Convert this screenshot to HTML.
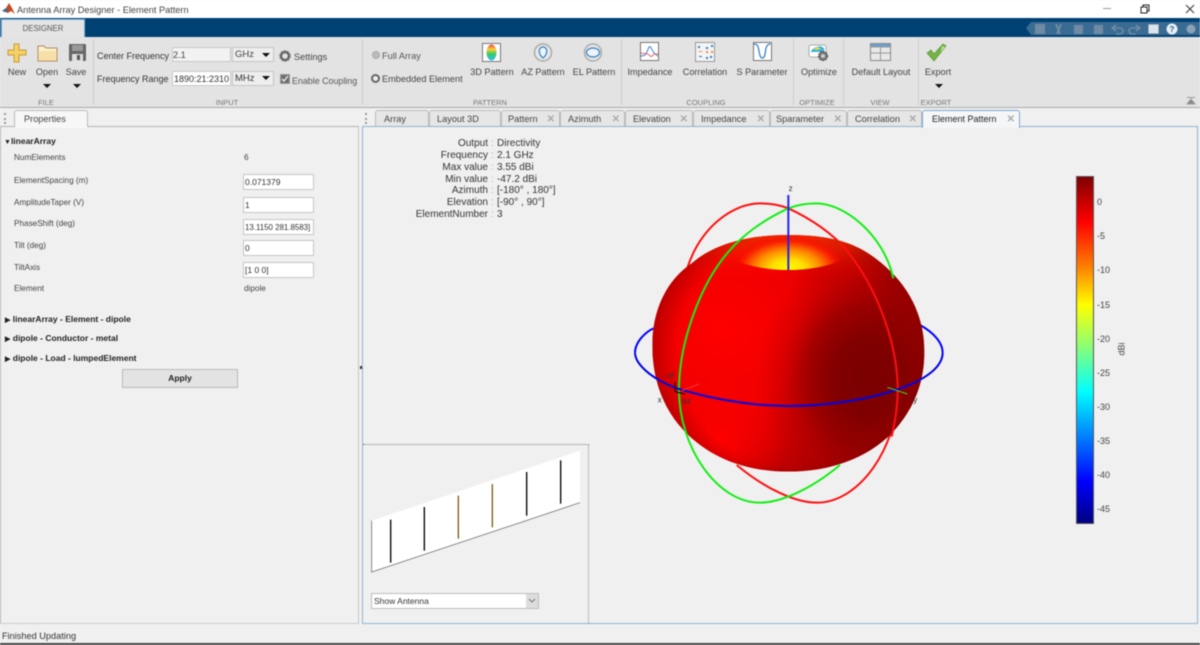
<!DOCTYPE html>
<html><head><meta charset="utf-8"><style>
html,body{margin:0;padding:0}
html{background:#f0f0f0}
body{width:1200px;height:645px;position:relative;overflow:hidden;background:#f0f0f0;font-family:"Liberation Sans",sans-serif;color:#333;filter:blur(.4px)}
.t{position:absolute;white-space:nowrap;line-height:12px;font-size:9.2px}
.c{transform:translateX(-50%)}
.b{position:absolute;box-sizing:border-box}
.sec{font-size:7.5px;color:#777;top:97px}
.lbl{font-size:9.1px;color:#444;top:66px}
.p{font-size:8.2px;color:#444}
.h{font-size:8.5px;font-weight:bold;color:#222}
.in{position:absolute;left:243px;width:71px;height:16px;background:#fff;border:1px solid #c6c6c6;box-sizing:border-box;font-size:8.5px;line-height:15px;padding-left:1px;color:#333;white-space:nowrap;overflow:hidden}
.tab{position:absolute;top:110px;height:17px;box-sizing:border-box;background:#e6e6e6;border:1px solid #bbb;border-bottom:none;border-radius:3px 3px 0 0;font-size:9.2px;line-height:17px;color:#444;padding-left:7px;white-space:nowrap}
.x{position:absolute;right:4px;top:0;color:#aaa;font-size:10px;font-weight:bold}
.sep{position:absolute;top:39px;height:66px;width:1px;background:#cdcdcd}
.info{font-size:10px;color:#333}
.k{right:712px}
.col{left:491px;color:#aaa}
.tick{font-size:9px;color:#444;left:1097px}
.tri{position:absolute;width:0;height:0;border-left:4px solid transparent;border-right:4px solid transparent;border-top:4px solid #111}
svg{position:absolute}
</style></head><body>
<!-- title bar -->
<div class="b" style="left:0;top:0;width:1200px;height:18px;background:#fff"></div>
<svg style="left:2px;top:2px" width="14" height="14" viewBox="0 0 14 14"><path d="M0 9L4 6 7 1 10 6 13 12 9 9 6 11Z" fill="#c8481c"/><path d="M0 9L4 6 6 8 4 10Z" fill="#2a6fb0"/></svg>
<div class="t" style="left:17px;top:4px;font-size:9.2px;color:#444">Antenna Array Designer - Element Pattern</div>
<svg style="left:1090px;top:0" width="110" height="18"><path d="M13 8.500H21" stroke="#999"/><path d="M51 7h6v6h-6zM53 7V5h6v6h-2" fill="none" stroke="#222"/><path d="M96 5l8 8M104 5l-8 8" stroke="#333"/></svg>
<!-- blue band -->
<div class="b" style="left:0;top:18px;width:1200px;height:19px;background:#004174"></div>
<div class="b" style="left:1px;top:19px;width:84px;height:18px;background:#e4e4e4;border:1px solid #7fb3dc;border-bottom:none"></div>
<div class="t c" style="left:43px;top:23px;font-size:7.8px;color:#555">DESIGNER</div>
<!-- quick toolbar -->
<svg style="left:1026px;top:20px" width="174" height="17" viewBox="0 0 174 17">
<path d="M0 8L5 2H174V15H5Z" fill="#3a6b93"/>
<rect x="9" y="4" width="10" height="10" fill="#6f8aa2"/><path d="M30 4l4 10M35 4l-4 10" stroke="#6f8aa2" stroke-width="2"/>
<rect x="48" y="5" width="9" height="9" fill="#6f8aa2"/><rect x="68" y="5" width="9" height="9" fill="#6f8aa2"/>
<path d="M90 5l-4 3 4 3M86 8h8a3 3 0 0 1 0 6h-4" fill="none" stroke="#6f8aa2" stroke-width="1.600"/>
<path d="M110 5l4 3-4 3M114 8h-8a3 3 0 0 0 0 6h4" fill="none" stroke="#6f8aa2" stroke-width="1.600"/>
<rect x="122" y="4" width="11" height="10" fill="#dbe4ec" stroke="#53718a"/>
<circle cx="146" cy="9" r="5.500" fill="#e8eff5"/><text x="143.500" y="12" font-size="8" font-weight="bold" fill="#2f6188" font-family="Liberation Sans">?</text>
<circle cx="165" cy="9" r="4.500" fill="#8aa2b6"/>
</svg>
<!-- ribbon -->
<div class="b" style="left:0;top:37px;width:1200px;height:71px;background:#e3e3e3;border-bottom:1px solid #aaa"></div>
<div class="sep" style="left:93px"></div><div class="sep" style="left:362px"></div><div class="sep" style="left:621px"></div><div class="sep" style="left:793px"></div><div class="sep" style="left:843px"></div><div class="sep" style="left:918px"></div>
<!-- FILE icons -->
<svg style="left:7px;top:43px" width="80" height="20" viewBox="0 0 80 20">
<path d="M7 1h5v6h7v5h-7v7H7v-7H1V7h6z" fill="#f4d264" stroke="#c99a3a"/>
<path d="M31 3h6l2 2h11v13H31z" fill="#fdf0cf" stroke="#b08a5c"/><path d="M32 8h17v9H32z" fill="#f7e0a8"/>
<rect x="62" y="1" width="17" height="17" rx="1" fill="#666"/><rect x="65" y="2" width="11" height="6" fill="#999"/><rect x="65" y="11" width="11" height="7" fill="#ddd"/><rect x="70" y="12" width="3" height="5" fill="#555"/>
</svg>
<div class="t c lbl" style="left:17px">New</div><div class="t c lbl" style="left:47px">Open</div><div class="t c lbl" style="left:76px">Save</div>
<div class="tri" style="left:43px;top:84px"></div><div class="tri" style="left:73px;top:84px"></div>
<div class="t c sec" style="left:46px">FILE</div>
<!-- INPUT -->
<div class="t" style="left:97px;top:50px;color:#333;font-size:9px">Center Frequency</div>
<div class="t" style="left:97px;top:73px;color:#333;font-size:9px">Frequency Range</div>
<div class="b" style="left:172px;top:47px;width:59px;height:15px;background:#f2f2f2;border:1px solid #c8c8c8;font-size:9.2px;line-height:14px;color:#444">2.1</div>
<div class="b" style="left:172px;top:71px;width:59px;height:15px;background:#fff;border:1px solid #c8c8c8;font-size:9px;line-height:14px;color:#333;padding-left:1px;overflow:hidden;white-space:nowrap">1890:21:2310</div>
<div class="b" style="left:232px;top:47px;width:42px;height:15px;background:#eee;border:1px solid #c4c4c4;font-size:9.5px;line-height:14px;padding-left:2px;color:#444">GHz</div>
<div class="b" style="left:232px;top:71px;width:42px;height:15px;background:#eee;border:1px solid #c4c4c4;font-size:9.5px;line-height:14px;padding-left:2px;color:#333">MHz</div>
<div class="tri" style="left:262px;top:53px"></div><div class="tri" style="left:262px;top:76px"></div>
<svg style="left:279px;top:50px" width="12" height="12"><circle cx="6" cy="6" r="4" fill="none" stroke="#666" stroke-width="2.500"/><circle cx="6" cy="6" r="5.500" fill="none" stroke="#999" stroke-dasharray="2 1.500"/></svg>
<div class="t" style="left:294px;top:51px;color:#444">Settings</div>
<div class="b" style="left:280px;top:74px;width:10px;height:10px;background:#6e6e6e;border:1px solid #999"></div>
<svg style="left:280px;top:74px" width="10" height="10"><path d="M2 5l2 2 4-5" fill="none" stroke="#eee" stroke-width="1.300"/></svg>
<div class="t" style="left:292px;top:75px;color:#555;font-size:8.9px">Enable Coupling</div>
<div class="t c sec" style="left:227px">INPUT</div>
<!-- PATTERN -->
<div class="b" style="left:372px;top:51px;width:8px;height:8px;border-radius:50%;background:#bbb;border:1px solid #aaa"></div>
<div class="t" style="left:382px;top:50px;color:#555">Full Array</div>
<div class="b" style="left:371px;top:74px;width:9px;height:9px;border-radius:50%;background:#eee;border:2.500px solid #666"></div>
<div class="t" style="left:382px;top:73px;color:#444;font-size:9.2px">Embedded Element</div>
<svg style="left:482px;top:42px" width="120" height="22" viewBox="0 0 120 22">
<rect x=".5" y="1.500" width="18" height="18" fill="#fff" stroke="#777"/>
<defs><linearGradient id="a" x1="0" y1="0" x2="0" y2="1"><stop offset="0" stop-color="#e44"/><stop offset=".3" stop-color="#fc3"/><stop offset=".6" stop-color="#3c6"/><stop offset="1" stop-color="#3bf"/></linearGradient></defs>
<ellipse cx="9.500" cy="10.500" rx="5" ry="8" fill="url(#a)"/>
<circle cx="61" cy="10.500" r="8.500" fill="#e8e8e8" stroke="#aaa" stroke-width="1.500"/><path d="M61 16c-5-4-5-11 0-11s5 7 0 11z" fill="#eef4fa" stroke="#4a8cc7" stroke-width="1.400"/>
<circle cx="111" cy="10.500" r="8.500" fill="#e8e8e8" stroke="#aaa" stroke-width="1.500"/><ellipse cx="111" cy="10.500" rx="6.500" ry="4.500" fill="#eef4fa" stroke="#4a8cc7" stroke-width="1.400"/>
</svg>
<div class="t c lbl" style="left:492px">3D Pattern</div><div class="t c lbl" style="left:543px">AZ Pattern</div><div class="t c lbl" style="left:594px">EL Pattern</div>
<div class="t c sec" style="left:490px">PATTERN</div>
<!-- COUPLING -->
<svg style="left:640px;top:42px" width="135" height="22" viewBox="0 0 135 22">
<rect x=".5" y=".5" width="18" height="18" fill="#fff" stroke="#777"/><path d="M1 14c5 0 5-2 8-9 2-3 3 7 9 9" fill="none" stroke="#3b86c6"/><path d="M1 11c4 1 6 0 8 2s3 2 4 0 3-1 5-1" fill="none" stroke="#e67"/>
<rect x="55.500" y=".5" width="19" height="19" fill="#f4f4f4" stroke="#999"/><g fill="#2a7fc4"><rect x="58" y="4" width="2" height="2"/><rect x="66" y="5" width="2" height="2"/><rect x="71" y="3" width="2" height="2"/><rect x="70" y="14" width="2" height="2"/><rect x="59" y="14" width="3" height="1"/><rect x="66" y="15" width="2" height="2"/></g><g fill="#e84"><rect x="59" y="9" width="3" height="1"/><rect x="66" y="9" width="2" height="2"/><rect x="71" y="9" width="2" height="2"/></g>
<rect x="113.500" y=".5" width="18" height="18" fill="#fff" stroke="#777"/><path d="M114 2c3 0 4 1 5 7s2 7 3.500 7 2.500-2 3-7 2-7 5-7" fill="none" stroke="#3b86c6" stroke-width="1.300"/>
</svg>
<div class="t c lbl" style="left:650px">Impedance</div><div class="t c lbl" style="left:705px">Correlation</div><div class="t c lbl" style="left:762px">S Parameter</div>
<div class="t c sec" style="left:706px">COUPLING</div>
<!-- OPTIMIZE -->
<svg style="left:808px;top:43px" width="22" height="20" viewBox="0 0 22 20">
<rect x="1" y="2" width="17" height="12" rx="2" fill="#fff" stroke="#aaa"/><path d="M3 8c3-4 6-4 9-5l4 2v4H3z" fill="#39b5d8"/><path d="M5 6l5-2 3 2-4 1z" fill="#e8d84c"/>
<circle cx="15" cy="13" r="4.500" fill="#777" stroke="#444" stroke-dasharray="2 1"/><circle cx="15" cy="13" r="2" fill="#ccc"/></svg>
<div class="t c lbl" style="left:819px">Optimize</div>
<div class="t c sec" style="left:817px">OPTIMIZE</div>
<!-- VIEW -->
<svg style="left:870px;top:43px" width="22" height="19" viewBox="0 0 22 19"><rect x=".5" y=".5" width="20" height="17" fill="#e8e8e8" stroke="#8a8a8a"/><rect x="1" y="1" width="19" height="2.500" fill="#6aa0cf"/><path d="M1 4h19M10.500 4v13M1 10h19" stroke="#999"/></svg>
<div class="t c lbl" style="left:881px">Default Layout</div>
<div class="t c sec" style="left:880px">VIEW</div>
<!-- EXPORT -->
<svg style="left:926px;top:43px" width="22" height="20" viewBox="0 0 22 20"><path d="M1 10l4-3 3 4 9-10 3 2-12 15z" fill="#72b545" stroke="#5a9636" stroke-width=".7"/><path d="M16 3l3 1-4 5z" fill="#bfe09d"/></svg>
<div class="t c lbl" style="left:938px">Export</div>
<div class="tri" style="left:935px;top:84px"></div>
<div class="t c sec" style="left:936px">EXPORT</div>
<svg style="left:1186px;top:96px" width="10" height="10"><path d="M1 1.500H9M5 3L1 8H9Z" fill="#888" stroke="#999"/></svg>
<!-- left panel tab -->
<div class="b" style="left:14px;top:110px;width:74px;height:17px;background:#f7f7f7;border:1px solid #bbb;border-bottom:none;border-radius:3px 3px 0 0;font-size:9.2px;line-height:17px;padding-left:9px;color:#444">Properties</div>
<div class="b" style="left:0;top:126px;width:359px;height:498px;border:1px solid #b5b5b5;border-right:1px solid #c6c6c6;border-bottom:1px solid #ccc"></div>
<div class="b" style="left:15px;top:126px;width:72px;height:2px;background:#f7f7f7"></div>
<!-- properties -->
<div class="t h" style="left:4px;top:135px"><span style="font-size:7px">&#9660;</span>linearArray</div>
<div class="t p" style="left:14px;top:152px">NumElements</div><div class="t p" style="left:244px;top:152px">6</div>
<div class="t p" style="left:14px;top:175px">ElementSpacing (m)</div><div class="in" style="top:174px">0.071379</div>
<div class="t p" style="left:14px;top:197px">AmplitudeTaper (V)</div><div class="in" style="top:197px">1</div>
<div class="t p" style="left:14px;top:218px">PhaseShift (deg)</div><div class="in" style="top:219px;font-size:7.9px">13.1150 281.8583]</div>
<div class="t p" style="left:14px;top:240px">Tilt (deg)</div><div class="in" style="top:240px">0</div>
<div class="t p" style="left:14px;top:262px">TiltAxis</div><div class="in" style="top:262px">[1 0 0]</div>
<div class="t p" style="left:14px;top:283px">Element</div><div class="t p" style="left:244px;top:283px">dipole</div>
<div class="t h" style="left:5px;top:313px"><span style="font-size:7px">&#9654;</span> linearArray - Element - dipole</div>
<div class="t h" style="left:5px;top:332px"><span style="font-size:7px">&#9654;</span> dipole - Conductor - metal</div>
<div class="t h" style="left:5px;top:352px"><span style="font-size:7px">&#9654;</span> dipole - Load - lumpedElement</div>
<div class="b" style="left:122px;top:369px;width:116px;height:19px;background:#e3e3e3;border:1px solid #bbb;font-size:8.500px;font-weight:bold;line-height:17px;text-align:center;color:#222">Apply</div>
<!-- tabs -->
<div class="tab" style="left:375px;width:54px;padding-left:8px">Array</div>
<div class="tab" style="left:429px;width:72px">Layout 3D</div>
<div class="tab" style="left:501px;width:59px;padding-left:6px">Pattern<span class="x">&#10005;</span></div>
<div class="tab" style="left:560px;width:65px">Azimuth<span class="x">&#10005;</span></div>
<div class="tab" style="left:625px;width:68px">Elevation<span class="x">&#10005;</span></div>
<div class="tab" style="left:693px;width:77px">Impedance<span class="x">&#10005;</span></div>
<div class="tab" style="left:770px;width:77px;padding-left:5px">Sparameter<span class="x">&#10005;</span></div>
<div class="tab" style="left:847px;width:75px">Correlation<span class="x">&#10005;</span></div>
<div class="b" style="left:362px;top:126px;width:836px;height:498px;border:1px solid #8fb4d6;background:#f0f0f0"></div>
<div class="tab" style="left:922px;width:98px;height:18px;background:#f4f6f8;border-color:#7ba9d2;color:#222;padding-left:9px;font-size:9px">Element Pattern<span class="x">&#10005;</span></div>
<!-- info -->
<div class="t info k" style="top:138px">Output</div><div class="t info col" style="top:138px">:</div><div class="t info" style="left:497px;top:138px">Directivity</div>
<div class="t info k" style="top:150px">Frequency</div><div class="t info col" style="top:150px">:</div><div class="t info" style="left:497px;top:150px">2.1 GHz</div>
<div class="t info k" style="top:162px">Max value</div><div class="t info col" style="top:162px">:</div><div class="t info" style="left:497px;top:162px">3.55 dBi</div>
<div class="t info k" style="top:174px">Min value</div><div class="t info col" style="top:174px">:</div><div class="t info" style="left:497px;top:174px">-47.2 dBi</div>
<div class="t info k" style="top:185px">Azimuth</div><div class="t info col" style="top:185px">:</div><div class="t info" style="left:497px;top:185px">[-180° , 180°]</div>
<div class="t info k" style="top:197px">Elevation</div><div class="t info col" style="top:197px">:</div><div class="t info" style="left:497px;top:197px">[-90° , 90°]</div>
<div class="t info k" style="top:209px">ElementNumber</div><div class="t info col" style="top:209px">:</div><div class="t info" style="left:497px;top:209px">3</div>
<!-- sphere (coordinates in 3x zoom units) -->
<svg style="left:620px;top:170px" width="340" height="340" viewBox="0 0 1020 1020">
<defs>
<clipPath id="sp"><path d="M505 195C600 195 680 208 745 250C850 320 913 420 913 545C913 640 880 720 815 790C740 865 630 905 505 905C380 905 270 865 190 780C130 715 97 630 97 525C97 420 140 330 215 280C290 215 400 195 505 195Z"/></clipPath>
<clipPath id="cap"><ellipse cx="505" cy="195" rx="230" ry="105"/></clipPath>
<radialGradient id="g1" gradientUnits="userSpaceOnUse" cx="310" cy="480" r="520"><stop offset="0" stop-color="#ff0000"/><stop offset=".45" stop-color="#f00000"/><stop offset=".75" stop-color="#cc0000"/><stop offset="1" stop-color="#a80000"/></radialGradient>
<radialGradient id="g2" gradientUnits="userSpaceOnUse" cx="1" cy="1" r="1" gradientTransform="translate(740 620) scale(330 380) translate(-1 -1)"><stop offset="0" stop-color="#7a0000"/><stop offset=".3" stop-color="#7e0000" stop-opacity=".95"/><stop offset=".55" stop-color="#880000" stop-opacity=".7"/><stop offset=".8" stop-color="#a00000" stop-opacity=".25"/><stop offset="1" stop-color="#a00000" stop-opacity="0"/></radialGradient>
<radialGradient id="g3" gradientUnits="userSpaceOnUse" cx="1" cy="1" r="1" gradientTransform="translate(505 298) scale(175 105) translate(-1 -1)"><stop offset="0" stop-color="#ffff00"/><stop offset=".28" stop-color="#ffe000"/><stop offset=".55" stop-color="#ff8c00"/><stop offset=".8" stop-color="#fa2000"/><stop offset="1" stop-color="#f00000" stop-opacity="0"/></radialGradient>
<radialGradient id="g4" gradientUnits="userSpaceOnUse" cx="300" cy="810" r="200"><stop offset="0" stop-color="#ff0000"/><stop offset="1" stop-color="#ff0000" stop-opacity="0"/></radialGradient>
<linearGradient id="g5" x1="0" y1="0" x2="0" y2="1"><stop offset="0" stop-color="#ff3000"/><stop offset=".1" stop-color="#ff3000" stop-opacity=".25"/><stop offset=".2" stop-color="#ff0000" stop-opacity="0"/></linearGradient>
<radialGradient id="g6" gradientUnits="userSpaceOnUse" cx="505" cy="550" r="415"><stop offset=".8" stop-color="#900000" stop-opacity="0"/><stop offset="1" stop-color="#800000" stop-opacity=".5"/></radialGradient>
</defs>
<!-- back parts of rings -->
<path d="M100 475C70 490 45 520 45 548" fill="none" stroke="#0000ff" stroke-width="6"/>
<path d="M900 465C945 490 968 520 968 548" fill="none" stroke="#0000ff" stroke-width="6"/>
<path d="M200 300C240 170 340 100 420 100C455 100 480 105 505 115C580 150 640 195 680 240C770 340 833 520 833 660C833 830 720 998 590 998C530 998 440 960 350 885" fill="none" stroke="#ff1010" stroke-width="6"/>
<g clip-path="url(#sp)">
<rect width="1020" height="1020" fill="url(#g1)"/>
<rect width="1020" height="1020" fill="url(#g4)"/>
<rect width="1020" height="1020" fill="url(#g2)"/>
<rect y="195" width="1020" height="710" fill="url(#g5)"/>
<rect width="1020" height="1020" fill="url(#g6)"/>
<rect width="1020" height="1020" fill="url(#g3)" clip-path="url(#cap)"/>
</g>
<path d="M660 218C770 340 833 520 833 660C833 720 822 770 815 800" fill="none" stroke="#ff1010" stroke-width="6"/>
<path d="M820 325C790 190 670 100 590 100C555 100 530 105 505 115C430 150 370 195 330 240C240 340 177 520 177 660C177 830 290 998 420 998C480 998 570 960 660 885" fill="none" stroke="#14ee14" stroke-width="6"/>
<path d="M45 548C45 580 90 625 170 655C300 695 420 708 505 708C620 708 740 690 833 658C920 628 968 590 968 548" fill="none" stroke="#0000e6" stroke-width="6"/>
<path d="M505 75V300" stroke="#2222ee" stroke-width="6"/>
<path d="M802 652L862 672" stroke="#32d81e" stroke-width="3"/>
<path d="M185 662L238 642" stroke="#f33" stroke-width="3"/>
<path d="M165 665V636M165 665L195 672" stroke="#111" stroke-width="3.500"/>
<text x="506" y="63" font-size="24" fill="#333" font-family="Liberation Sans">z</text>
<text x="113" y="698" font-size="24" fill="#333" font-family="Liberation Sans">x</text>
<text x="880" y="698" font-size="24" fill="#333" font-family="Liberation Sans">y</text>
<text x="142" y="624" font-size="26" fill="#333" font-family="Liberation Sans">el</text>
<text x="186" y="700" font-size="26" fill="#333" font-family="Liberation Sans">az</text>
</svg>
<!-- colorbar -->
<div class="b" style="left:1076px;top:176px;width:18px;height:348px;border:1px solid #555;background:linear-gradient(to bottom,#800000 0%,#ff0000 13%,#ff8000 26%,#ffff00 37%,#80ff80 50%,#00ffff 62%,#0080ff 75%,#0000ff 88%,#000080 100%)"></div>
<div class="t tick" style="left:1097px;top:196px">0</div>
<div class="t tick" style="top:230px">-5</div>
<div class="t tick" style="top:264px">-10</div>
<div class="t tick" style="top:299px">-15</div>
<div class="t tick" style="top:333px">-20</div>
<div class="t tick" style="top:367px">-25</div>
<div class="t tick" style="top:401px">-30</div>
<div class="t tick" style="top:435px">-35</div>
<div class="t tick" style="top:469px">-40</div>
<div class="t tick" style="top:503px">-45</div>
<div class="t" style="left:1115px;top:343px;font-size:9px;color:#444;transform:rotate(-90deg);transform-origin:center">dBi</div>
<!-- antenna inset -->
<div class="b" style="left:363px;top:444px;width:226px;height:180px;border-top:1px dotted #777;border-right:1px dotted #888"></div>
<svg style="left:360px;top:430px" width="240" height="170" viewBox="0 0 720 510">
<path d="M35 272L660 62V218L35 426Z" fill="#fff"/>
<path d="M35 272V426L660 218" fill="none" stroke="#777" stroke-width="2.500"/>
<g stroke-width="4"><path d="M92 269V398" stroke="#000"/><path d="M193 231V362" stroke="#000"/><path d="M295 197V326" stroke="#7d5c14"/><path d="M397 162V292" stroke="#7d5c14"/><path d="M500 126V257" stroke="#000"/><path d="M602 91V221" stroke="#000"/></g>
</svg>
<div class="b" style="left:371px;top:593px;width:168px;height:16px;background:#fff;border:1px solid #bdbdbd;font-size:8.500px;line-height:15px;padding-left:2px;color:#333">Show Antenna</div>
<div class="b" style="left:526px;top:594px;width:12px;height:14px;background:#ddd"></div>
<svg style="left:527px;top:597px" width="10" height="8"><path d="M2 2l3 3 3-3" fill="none" stroke="#777"/></svg>
<!-- splitter dot and status -->
<div class="b" style="left:360px;top:366px;width:2px;height:3px;background:#333"></div>
<div class="t" style="left:2px;top:630px;font-size:9.200px;color:#333">Finished Updating</div>
<div class="b" style="left:0;top:643px;width:1200px;height:2px;background:#444"></div>
<!-- grips -->
<div class="b" style="left:4px;top:113px;width:2px;height:11px;border-left:2px dotted #999"></div>
<div class="b" style="left:365px;top:113px;width:2px;height:11px;border-left:2px dotted #999"></div>
</body></html>
